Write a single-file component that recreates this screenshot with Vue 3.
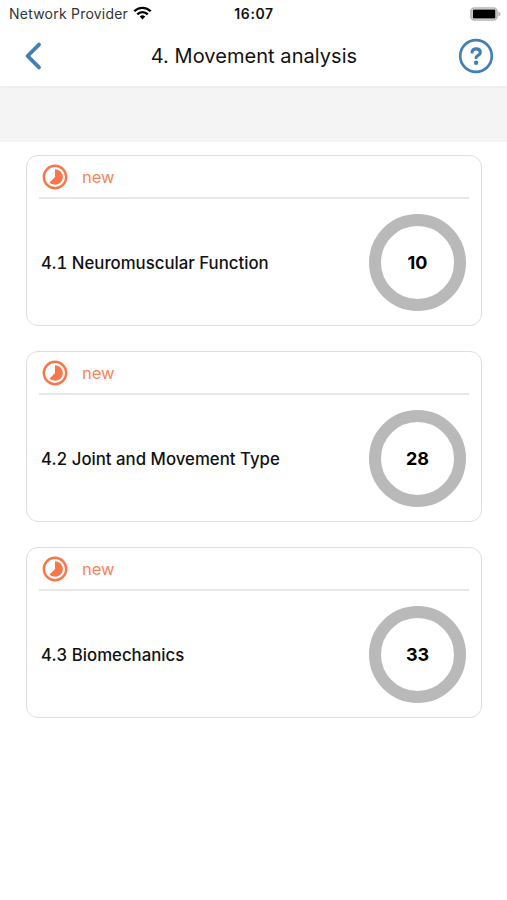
<script setup>
import { reactive } from "vue";

const local_data = reactive({
    title: "4. Movement analysis",
    topics: [
        { id: 1, name: "4.1 Neuromuscular Function", count: 10 },
        { id: 2, name: "4.2 Joint and Movement Type", count: 28 },
        { id: 3, name: "4.3 Biomechanics", count: 33 },
    ],
});

const emit = defineEmits(["back", "help", "openTopic"]);
</script>
<template>
    <div class="page">
        <header class="header">
            <div class="status-bar">
                <div class="network">
                    <span class="provider">Network Provider</span>
                    <svg class="wifi" viewBox="0 0 20 14">
                        <path d="M1.4 5.2 A12 12 0 0 1 18.6 5.2" />
                        <path d="M4.5 8.4 A7.8 7.8 0 0 1 15.5 8.4" />
                        <path
                            class="wifi-dot"
                            d="M7.1 10.7 Q10 8.2 12.9 10.7 L10 13.8 Z"
                        />
                    </svg>
                </div>
                <span class="time">16:07</span>
                <svg class="battery" viewBox="0 0 31 14">
                    <rect class="battery-case" x="1" y="1" width="26" height="12" rx="3.4" />
                    <rect x="2.8" y="2.5" width="22.6" height="9" rx="1.2" />
                    <path class="battery-tip" d="M28.4 4.6 Q30.6 5.4 30.6 7 Q30.6 8.6 28.4 9.4 Z" />
                </svg>
            </div>
            <div class="nav">
                <button class="nav-button" @click="emit('back')">
                    <svg class="chevron" viewBox="0 0 18 30">
                        <path d="M15 3.6 L3.6 15 L15 26.4" />
                    </svg>
                </button>
                <h1 class="title">{{ local_data.title }}</h1>
                <button class="nav-button nav-help" @click="emit('help')">
                    <svg class="help" viewBox="0 0 36 36">
                        <circle cx="18" cy="18" r="15.8" />
                        <path d="M14 14 C14.6 11.7 16.1 10.9 18.1 10.9 C20.5 10.9 22.3 12.2 22.3 14.4 C22.3 17.4 18.1 17.3 18.1 19.8" />
                        <circle class="help-dot" cx="18.1" cy="24.8" r="2.2" />
                    </svg>
                </button>
            </div>
        </header>
        <div class="band"></div>
        <main class="topics">
            <div
                v-for="topic in local_data.topics"
                :key="topic.id"
                class="card"
                @click="emit('openTopic', topic.id)"
            >
                <div class="card-status">
                    <svg class="progress-icon" viewBox="0 0 26 26">
                        <circle cx="13" cy="13" r="11.2" />
                        <path d="M13 5.3 A7.7 7.7 0 1 1 7.6 18.4 L13 13 Z" />
                    </svg>
                    <span>new</span>
                </div>
                <div class="card-body">
                    <span class="card-name">{{ topic.name }}</span>
                    <div class="ring">{{ topic.count }}</div>
                </div>
            </div>
        </main>
    </div>
</template>
<style>
body {
    background-color: white;
}
</style>
<style scoped>
.page {
    min-height: 900px;
    font-family: Inter, "Liberation Sans", sans-serif;
    color: #111;
}

.header {
    height: 86px;
    box-shadow: 0 1px 3px rgba(0, 0, 0, 0.04);
    position: relative;
}

.status-bar {
    display: grid;
    grid-template-columns: 1fr auto 1fr;
    align-items: center;
    height: 27px;
    padding: 0 6px 0 9px;
    box-sizing: border-box;
}

.network {
    display: flex;
    align-items: center;
    gap: 5px;
}

.provider {
    font-size: 14px;
    letter-spacing: 0.22px;
    color: #333;
    white-space: nowrap;
}

.wifi {
    width: 19px;
    height: 14px;
    margin-top: -1px;
    fill: none;
    stroke: black;
    stroke-width: 2.5;
}

.wifi .wifi-dot {
    fill: black;
    stroke: none;
}

.time {
    margin-right: 2px;
    font-size: 14px;
    font-weight: 600;
    letter-spacing: 0.6px;
}

.battery {
    justify-self: end;
    width: 31px;
    height: 14px;
}

.battery-case {
    fill: white;
    stroke: #b5b5b5;
    stroke-width: 1.7;
}

.battery-tip {
    fill: #b5b5b5;
}

.nav {
    display: grid;
    grid-template-columns: 1fr auto 1fr;
    align-items: center;
    height: 58px;
    padding: 0 13px 0 24px;
}

.nav-button {
    display: flex;
    padding: 0;
    border: none;
    background: none;
}

.nav-help {
    justify-self: end;
}

.chevron {
    width: 18px;
    height: 30px;
    fill: none;
    stroke: #427fb5;
    stroke-width: 3.8;
    stroke-linecap: round;
    stroke-linejoin: round;
}

.title {
    margin: 0 10px 0 0;
    font-size: 20px;
    font-weight: 400;
    letter-spacing: 0.05px;
}

.help {
    width: 36px;
    height: 36px;
    fill: none;
    stroke: #427fb5;
    stroke-width: 2.7;
}

.help path {
    stroke-width: 3.1;
    stroke-linecap: round;
}

.help .help-dot {
    fill: #427fb5;
    stroke: none;
}

.band {
    height: 56px;
    background-color: #f4f4f4;
}

.topics {
    display: flex;
    flex-direction: column;
    gap: 25px;
    padding: 13px 25px 13px 26px;
}

.card {
    height: 171px;
    box-sizing: border-box;
    padding: 0 12px;
    border: 1px solid #dedede;
    border-radius: 12px;
}

.card-status {
    display: flex;
    align-items: center;
    gap: 14px;
    height: 43px;
    padding-left: 3px;
    box-sizing: border-box;
    border-bottom: 2px solid #e8e8e8;
    font-size: 16.5px;
    color: #f8845a;
}

.progress-icon {
    width: 26px;
    height: 26px;
    fill: #f8774a;
}

.progress-icon circle {
    fill: none;
    stroke: #f8774a;
    stroke-width: 2.4;
}

.card-body {
    display: flex;
    align-items: center;
    justify-content: space-between;
    height: 127px;
    padding: 0 3px 0 2px;
}

.card-name {
    font-size: 16.8px;
    font-weight: 500;
    font-variant-numeric: tabular-nums;
}

.ring {
    display: flex;
    align-items: center;
    justify-content: center;
    width: 97px;
    height: 97px;
    box-sizing: border-box;
    border: 12px solid #b9b9b9;
    border-radius: 50%;
    font-size: 18px;
    font-weight: 700;
    color: black;
}
</style>
